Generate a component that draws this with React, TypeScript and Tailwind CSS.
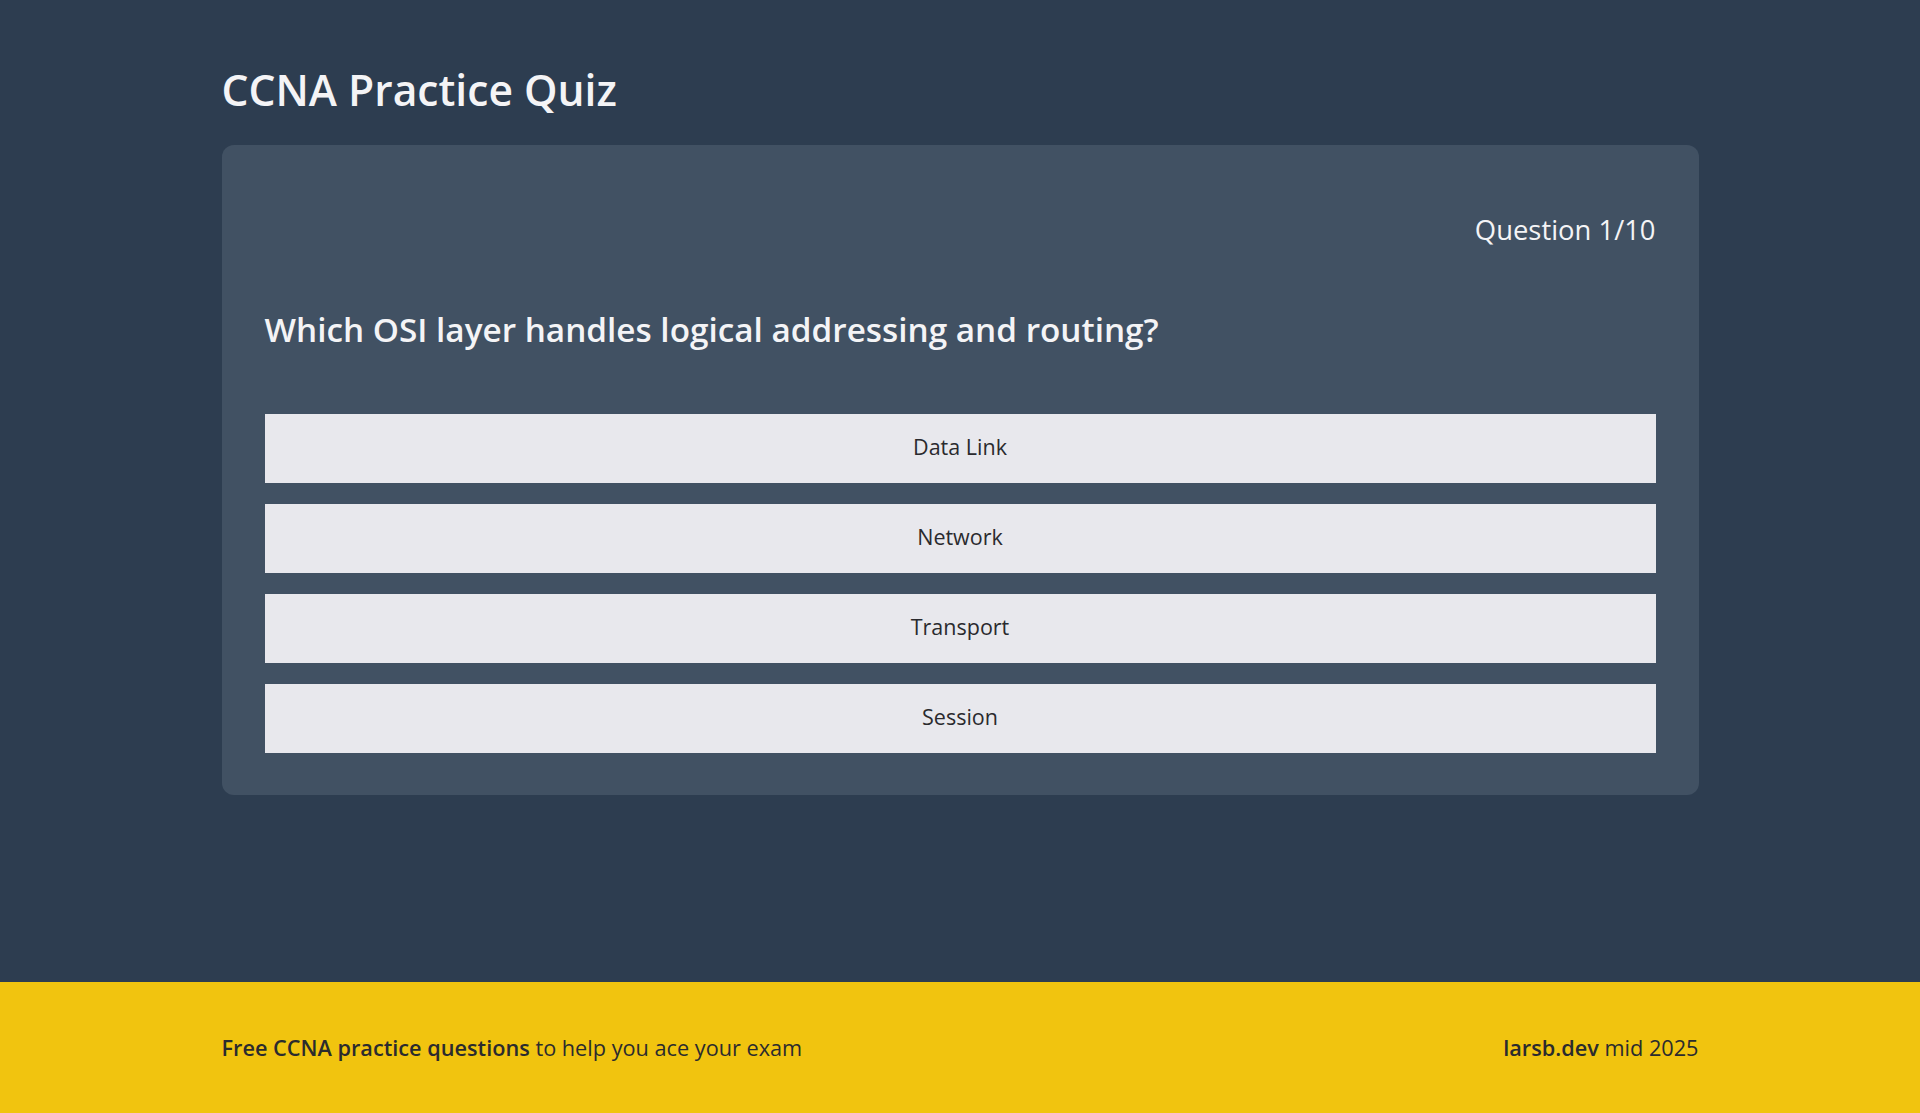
const options = ["Data Link", "Network", "Transport", "Session"]

export default function App() {
    return (
        <div className="h-screen flex flex-col bg-[#2d3d50] font-['Open_Sans','Noto_Sans',sans-serif]">
            <main className="flex-1">
                <div className="w-[1477px] mx-auto pt-[63px]">
                    <h1 className="text-[42.6px] leading-[52px] font-semibold text-[#f4f4f6] mb-[30px]">
                        CCNA Practice Quiz
                    </h1>

                    <div className="bg-[#415163] rounded-xl px-[43px] pt-[68px] pb-[42px]">
                        <div className="text-right text-[27.4px] leading-[34px] text-[#f4f4f6]">
                            Question 1/10
                        </div>
                        <h2 className="mt-[62px] text-[33.3px] leading-[40px] font-semibold text-[#f4f4f6]">
                            Which OSI layer handles logical addressing and routing?
                        </h2>
                        <div className="mt-[65px] flex flex-col gap-[21px]">
                            {options.map((opt) => (
                                <button
                                    key={opt}
                                    className="h-[69px] w-full bg-[#e8e8ed] text-[#2a2a2e] text-[21.5px] leading-[30px] flex items-center justify-center pb-[3px]"
                                >
                                    {opt}
                                </button>
                            ))}
                        </div>
                    </div>
                </div>
            </main>

            <footer className="h-[131px] bg-[#f1c40f] shrink-0">
                <div className="w-[1477px] mx-auto h-full flex items-center justify-between text-[21.7px] text-[#2b2b2e] pt-[2px]">
                    <p>
                        <span className="font-semibold">Free CCNA practice questions</span> to help you ace your exam
                    </p>
                    <p>
                        <span className="font-semibold">larsb.dev</span> mid 2025
                    </p>
                </div>
            </footer>
        </div>
    )
}
